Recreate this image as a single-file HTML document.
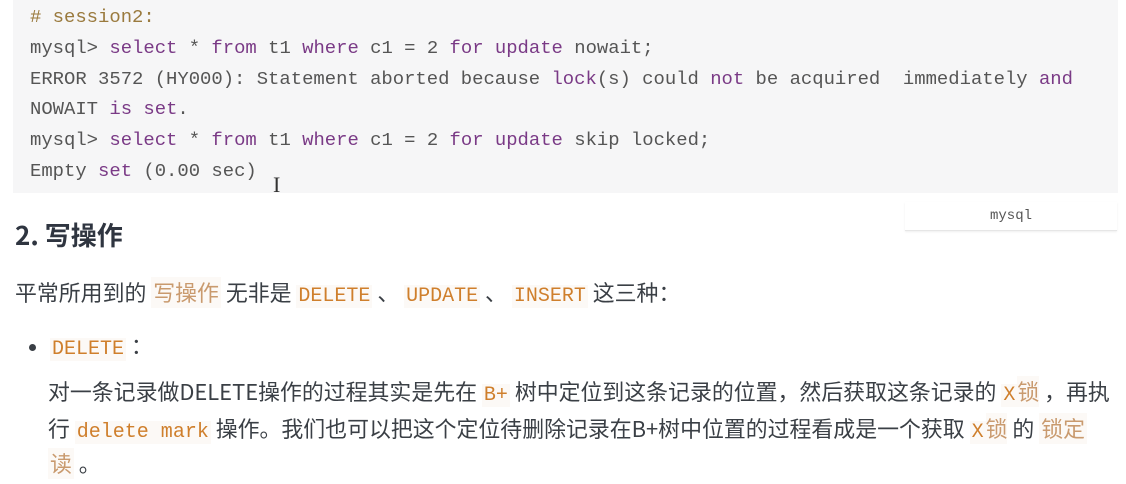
<!DOCTYPE html>
<html><head><meta charset="utf-8"><style>
body{margin:0;width:1126px;height:484px;background:#fff;position:relative;overflow:hidden;font-family:"Noto Sans CJK SC",sans-serif;color:#3a3f45}
.code{position:absolute;left:13px;top:0;width:1105px;height:193px;background:#f6f6f7}
.l{position:absolute;left:30px;font-family:"Liberation Mono",monospace;font-size:18.9px;color:#555;white-space:pre;line-height:20px}
.k{color:#7a3a86}.c{color:#9a7a3e}
.lab{position:absolute;left:905px;top:202px;width:212px;height:28px;background:#fff;border-bottom:1px solid #e6e6e6;box-shadow:0 1px 2px #eee;text-align:center;font-family:"Liberation Mono",monospace;font-size:14px;line-height:28px;color:#555}
.t{position:absolute;white-space:nowrap;font-size:21.9px;line-height:26px}
.ic{font-family:"Liberation Mono",monospace;font-size:20px;color:#cf7f2c;background:#fcf9f6;padding:0 2px}
.ic2{color:#c99a6e;background:#fcf9f6;padding:0 2px}
h2{position:absolute;left:15px;top:218px;margin:0;font-size:26px;font-weight:bold;color:#2f3540;line-height:34px}
</style></head><body>
<div class="code"></div>
<div class="l c" style="top:7px"># session2:</div>
<div class="l" style="top:38px">mysql&gt; <span class="k">select</span> * <span class="k">from</span> t1 <span class="k">where</span> c1 = 2 <span class="k">for update</span> nowait;</div>
<div class="l" style="top:69px">ERROR 3572 (HY000): Statement aborted because <span class="k">lock</span>(s) could <span class="k">not</span> be acquired  immediately <span class="k">and</span></div>
<div class="l" style="top:99px">NOWAIT <span class="k">is</span> <span class="k">set</span>.</div>
<div class="l" style="top:130px">mysql&gt; <span class="k">select</span> * <span class="k">from</span> t1 <span class="k">where</span> c1 = 2 <span class="k">for update</span> skip locked;</div>
<div class="l" style="top:161px">Empty <span class="k">set</span> (0.00 sec)</div>
<div style="position:absolute;left:273px;top:172px;font-size:22px;color:#333;font-family:'Liberation Serif',serif">I</div>
<div class="lab">mysql</div>
<h2>2. 写操作</h2>
<div class="t" style="left:15px;top:280px">平常所用到的 <span class="ic2">写操作</span> 无非是 <span class="ic">DELETE</span> 、 <span class="ic">UPDATE</span> 、 <span class="ic">INSERT</span> 这三种：</div>
<div style="position:absolute;left:29px;top:344px;width:7px;height:7px;border-radius:50%;background:#3a3f45"></div>
<div class="t" style="left:50px;top:333px"><span class="ic">DELETE</span> ：</div>
<div class="t" style="left:48px;top:379px">对一条记录做DELETE操作的过程其实是先在 <span class="ic">B+</span> 树中定位到这条记录的位置，然后获取这条记录的 <span class="ic">X</span><span class="ic2" style="padding:0">锁</span> ，再执</div>
<div class="t" style="left:48px;top:416px">行 <span class="ic">delete mark</span> 操作。我们也可以把这个定位待删除记录在B+树中位置的过程看成是一个获取 <span class="ic">X</span><span class="ic2" style="padding:0">锁</span> 的 <span class="ic2">锁定</span></div>
<div class="t" style="left:48px;top:451px"><span class="ic2">读</span> 。</div>
</body></html>
